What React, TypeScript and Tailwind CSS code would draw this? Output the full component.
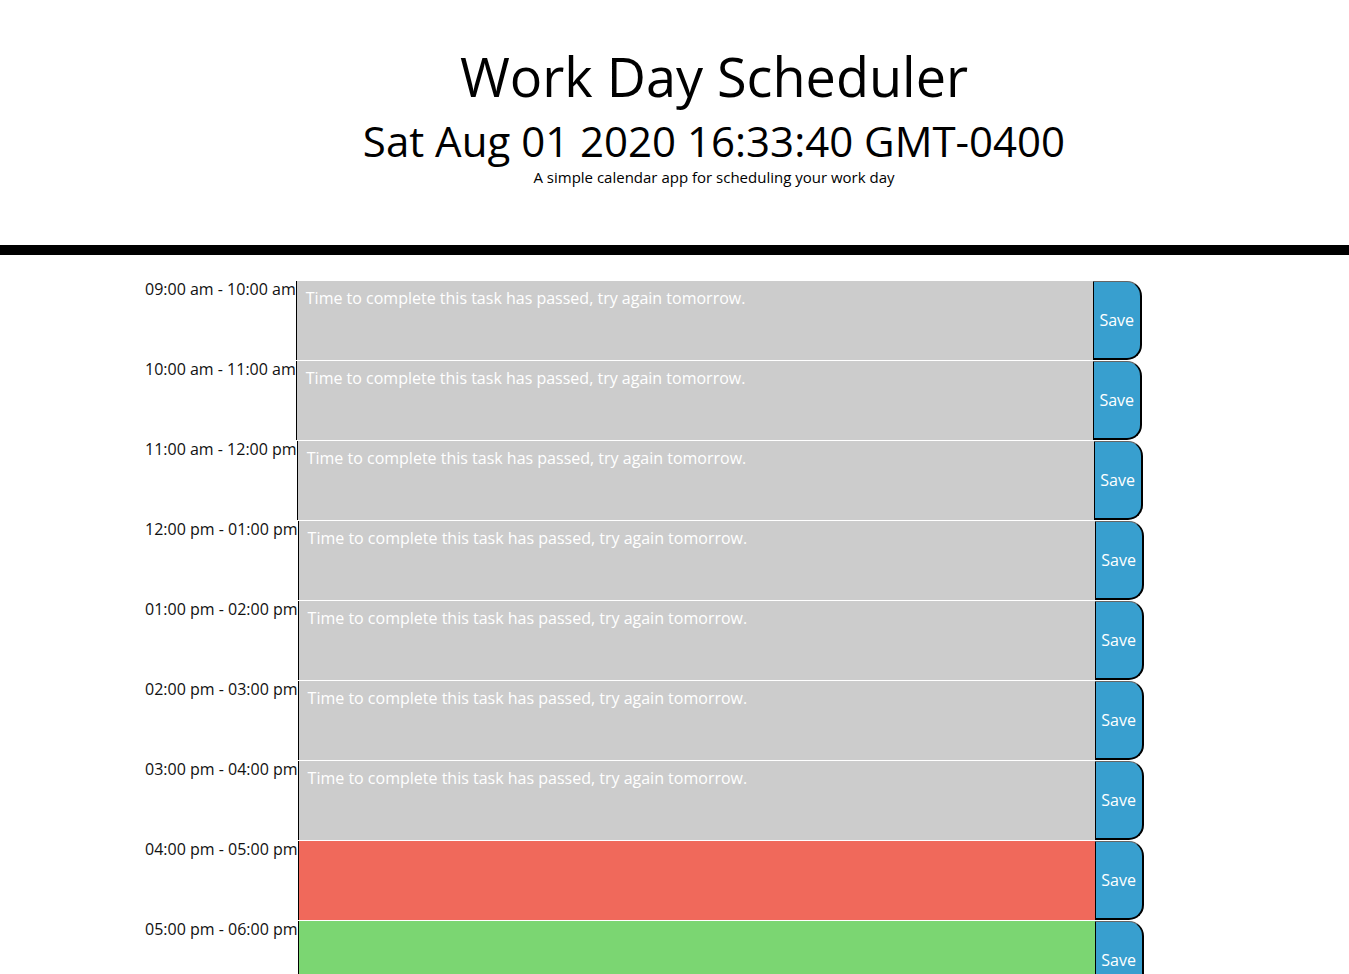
import React from "react";

const hours = [
  { label: "09:00 am - 10:00 am", state: "past" },
  { label: "10:00 am - 11:00 am", state: "past" },
  { label: "11:00 am - 12:00 pm", state: "past" },
  { label: "12:00 pm - 01:00 pm", state: "past" },
  { label: "01:00 pm - 02:00 pm", state: "past" },
  { label: "02:00 pm - 03:00 pm", state: "past" },
  { label: "03:00 pm - 04:00 pm", state: "past" },
  { label: "04:00 pm - 05:00 pm", state: "present" },
  { label: "05:00 pm - 06:00 pm", state: "future" },
];

export default function App() {
  return (
    <div className="min-h-screen bg-white text-black" style={{ fontFamily: '"Open Sans", "Noto Sans", sans-serif' }}>
      <header className="border-b-[10px] border-black pt-[44px] pb-[57px] pl-[79px] text-center">
        <h1 className="text-[54px] leading-[65px] font-normal">Work Day Scheduler</h1>
        <p className="text-[42px] leading-[51px] mt-[6px]">Sat Aug 01 2020 16:33:40 GMT-0400</p>
        <p className="text-[15px] leading-[22px]">A simple calendar app for scheduling your work day</p>
      </header>
      <div className="mt-[25px] ml-[145px] flex flex-col">
        {hours.map((h) => {
          const bg =
            h.state === "past" ? "bg-[#cccccc]" : h.state === "present" ? "bg-[#f0695b]" : "bg-[#7bd672]";
          return (
            <div key={h.label} className="flex h-[80px] border-t border-white">
              <div className="text-[16px] leading-[16px] text-[#111]">{h.label}</div>
              <textarea
                className={`w-[797px] h-full resize-none border-0 border-l border-black pl-[9px] pr-[10px] pt-[6px] text-[16px] leading-[22px] text-white placeholder:text-white placeholder:opacity-100 outline-none ${bg}`}
                placeholder={h.state === "past" ? "Time to complete this task has passed, try again tomorrow." : ""}
                style={{ fontFamily: '"Open Sans", "Noto Sans", sans-serif' }}
              />
              <button className="w-[49px] h-full flex items-center justify-center bg-[#389fcf] text-white text-[16px] border border-black border-t-[#666] border-r-2 border-b-2 rounded-r-[15px]">
                Save
              </button>
            </div>
          );
        })}
      </div>
    </div>
  );
}
